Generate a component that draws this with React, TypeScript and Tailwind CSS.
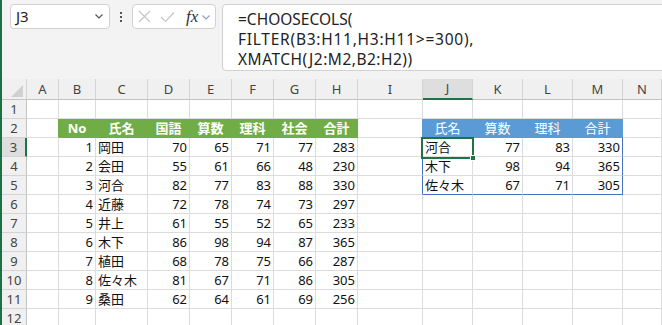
import React from 'react';

const COLS = ['A', 'B', 'C', 'D', 'E', 'F', 'G', 'H', 'I', 'J', 'K', 'L', 'M', 'N'];

const scores: (string | number)[][] = [
  [1, '岡田', 70, 65, 71, 77, 283],
  [2, '会田', 55, 61, 66, 48, 230],
  [3, '河合', 82, 77, 83, 88, 330],
  [4, '近藤', 72, 78, 74, 73, 297],
  [5, '井上', 61, 55, 52, 65, 233],
  [6, '木下', 86, 98, 94, 87, 365],
  [7, '植田', 68, 78, 75, 66, 287],
  [8, '佐々木', 81, 67, 71, 86, 305],
  [9, '桑田', 62, 64, 61, 69, 256],
];

const picked: (string | number)[][] = [
  ['河合', 77, 83, 330],
  ['木下', 98, 94, 365],
  ['佐々木', 67, 71, 305],
];

const mainHead = ['No', '氏名', '国語', '算数', '理科', '社会', '合計'];
const subHead = ['氏名', '算数', '理科', '合計'];

const font = { fontFamily: '"Noto Sans", "Noto Sans CJK JP", sans-serif' };

function FormulaBar() {
  return (
    <div className="h-[79px] shrink-0 bg-[#f3f3f3] flex items-start pt-[4px] pl-[8px]">
      <div className="w-[100px] h-[25px] bg-white border border-[#d1d1d1] rounded-[4px] flex items-center justify-between pl-[5px] pr-[6px]">
        <span className="text-[15px] text-[#222]">J3</span>
        <svg width="8" height="5" viewBox="0 0 8 5">
          <path d="M0.5 0.5 L4 4 L7.5 0.5" fill="none" stroke="#555" strokeWidth="1.2" />
        </svg>
      </div>
      <div className="w-[22px] flex flex-col items-center gap-[2px] pt-[8px]">
        <div className="w-[2px] h-[2px] bg-[#555]" />
        <div className="w-[2px] h-[2px] bg-[#555]" />
        <div className="w-[2px] h-[2px] bg-[#555]" />
      </div>
      <div className="w-[84px] h-[25px] bg-white border border-[#d1d1d1] rounded-[4px] flex items-center pl-[5px]">
        <svg width="13" height="13" viewBox="0 0 13 13">
          <path d="M1 1 L12 12 M12 1 L1 12" stroke="#c4c4c4" strokeWidth="1.1" />
        </svg>
        <svg width="15" height="12" viewBox="0 0 15 12" className="ml-[9px]">
          <path d="M1 6 L5.5 10.5 L14 1.5" fill="none" stroke="#c4c4c4" strokeWidth="1.1" />
        </svg>
        <span
          className="ml-[11px] text-[17px] italic text-[#333] leading-none"
          style={{ fontFamily: '"Liberation Serif", serif' }}
        >
          fx
        </span>
        <svg width="8" height="5" viewBox="0 0 8 5" className="ml-[4px] mt-[2px]">
          <path d="M0.5 0.5 L4 4 L7.5 0.5" fill="none" stroke="#8a9ac0" strokeWidth="1.1" />
        </svg>
      </div>
      <div className="ml-[6px] flex-1 mr-[-6px] h-[67px] bg-white border border-[#d1d1d1] rounded-[4px] pl-[15px] pt-[4px] text-[15.5px] leading-[20px] text-[#222]">
        <div>=CHOOSECOLS(</div>
        <div className="tracking-[0.75px]">FILTER(B3:H11,H3:H11&gt;=300),</div>
        <div className="tracking-[0.5px]">XMATCH(J2:M2,B2:H2))</div>
      </div>
    </div>
  );
}

function cellFor(row: number, col: number) {
  // row: 1..12, col: 0..13 (A..N)
  let text: string | number = '';
  let cls = 'border-[#dcdcdc] bg-white text-[#111]';
  let align = 'text-right';

  const right: string[] = [];
  const bottom: string[] = [];

  if (row === 2 && col >= 1 && col <= 7) {
    text = mainHead[col - 1];
    cls = 'bg-[#70ad47] border-[#70ad47] text-white font-bold';
    align = 'text-center';
  } else if (row === 2 && col >= 9 && col <= 12) {
    text = subHead[col - 9];
    cls = 'bg-[#5b9bd5] border-[#5b9bd5] text-white';
    align = 'text-center';
  } else if (row >= 3 && row <= 11 && col >= 1 && col <= 7) {
    text = scores[row - 3][col - 1];
    if (col === 2) align = 'text-left';
  } else if (row >= 3 && row <= 5 && col >= 9 && col <= 12) {
    text = picked[row - 3][col - 9];
    if (col === 9) align = 'text-left';
  }

  if (row === 2 && col === 0) right.push('border-r-[#70ad47]');
  if (row === 2 && col === 8) right.push('border-r-[#5b9bd5]');
  if (row >= 3 && row <= 5 && (col === 8 || col === 12)) right.push('border-r-[#4472c4]');
  if (row === 5 && col >= 9 && col <= 12) bottom.push('border-b-[#4472c4]');

  return (
    <div
      key={`${row}-${col}`}
      className={`h-[19px] border-r border-b overflow-hidden whitespace-nowrap px-[2px] text-[13px] leading-[18px] ${cls} ${align} ${right.join(' ')} ${bottom.join(' ')}`}
    >
      {text}
    </div>
  );
}

function Grid() {
  const rows = Array.from({ length: 12 }, (_, i) => i + 1);
  return (
    <div className="relative flex-1">
      <div className="grid grid-cols-[25px_32px_37px_52px_42px_42px_42px_42px_42px_65px_50px_50px_50px_50px_1fr]">
        <div className="h-[21px] bg-[#f0f0f0] border-r border-b border-r-[#d4d4d4] border-b-[#c4c4c4] relative">
          <svg width="12" height="12" viewBox="0 0 12 12" className="absolute right-[3px] bottom-[2px]">
            <path d="M12 0 L12 12 L0 12 Z" fill="#d0d0d0" />
          </svg>
        </div>
        {COLS.map((c) =>
          c === 'J' ? (
            <div
              key={c}
              className="h-[21px] bg-[#dedede] border-r border-r-[#d4d4d4] border-b-2 border-b-[#217346] text-center text-[13px] leading-[19px] text-[#444]"
            >
              {c}
            </div>
          ) : (
            <div
              key={c}
              className="h-[21px] bg-[#f0f0f0] border-r border-b border-r-[#d4d4d4] border-b-[#c4c4c4] text-center text-[13px] leading-[20px] text-[#444]"
            >
              {c}
            </div>
          )
        )}
        {rows.map((r) => (
          <React.Fragment key={r}>
            {r === 3 ? (
              <div className="h-[19px] bg-[#dedede] border-r-2 border-b border-r-[#217346] border-b-[#d4d4d4] text-center text-[13px] leading-[18px] text-[#444]">
                {r}
              </div>
            ) : (
              <div className="h-[19px] bg-[#f0f0f0] border-r border-b border-r-[#c4c4c4] border-b-[#d4d4d4] text-center text-[13px] leading-[18px] text-[#444]">
                {r}
              </div>
            )}
            {COLS.map((_, ci) => cellFor(r, ci))}
          </React.Fragment>
        ))}
      </div>
      {/* active cell J3 */}
      <div className="absolute left-[419px] top-[58px] w-[53px] h-[22px] border-2 border-[#217346] pointer-events-none" />
      <div className="absolute left-[468px] top-[76px] w-[6px] h-[6px] bg-[#217346] border border-white" />
    </div>
  );
}

export default function App() {
  return (
    <div className="w-[662px] h-[325px] overflow-hidden bg-white border-l-2 border-[#1e7145] flex flex-col" style={font}>
      <FormulaBar />
      <Grid />
    </div>
  );
}
